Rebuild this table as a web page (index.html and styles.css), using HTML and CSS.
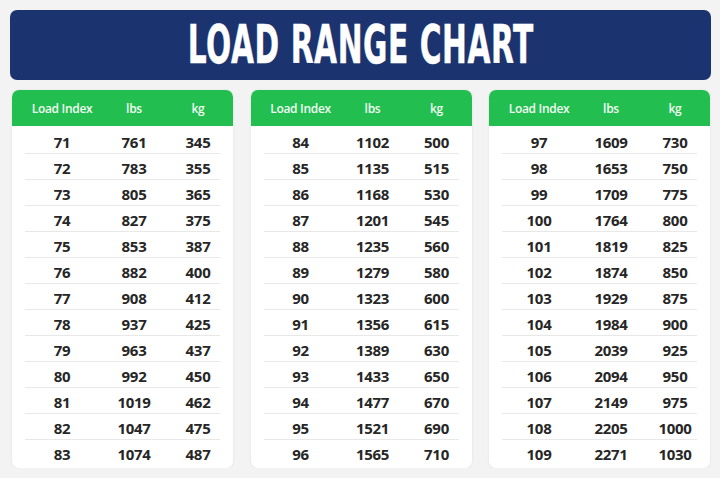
FILE: index.html
```html
<!DOCTYPE html>
<html>
<head>
<meta charset="utf-8">
<link rel="stylesheet" href="styles.css">
</head>
<body>
<div class="page">
  <header class="banner"><h1 class="title"><span>LOAD RANGE CHART</span></h1></header>
  <div class="tables">
    <section class="card">
      <div class="head"><span>Load Index</span><span>lbs</span><span>kg</span></div>
      <div class="rows">
        <div class="row"><span>71</span><span>761</span><span>345</span></div>
        <div class="row"><span>72</span><span>783</span><span>355</span></div>
        <div class="row"><span>73</span><span>805</span><span>365</span></div>
        <div class="row"><span>74</span><span>827</span><span>375</span></div>
        <div class="row"><span>75</span><span>853</span><span>387</span></div>
        <div class="row"><span>76</span><span>882</span><span>400</span></div>
        <div class="row"><span>77</span><span>908</span><span>412</span></div>
        <div class="row"><span>78</span><span>937</span><span>425</span></div>
        <div class="row"><span>79</span><span>963</span><span>437</span></div>
        <div class="row"><span>80</span><span>992</span><span>450</span></div>
        <div class="row"><span>81</span><span>1019</span><span>462</span></div>
        <div class="row"><span>82</span><span>1047</span><span>475</span></div>
        <div class="row"><span>83</span><span>1074</span><span>487</span></div>
      </div>
    </section>
    <section class="card">
      <div class="head"><span>Load Index</span><span>lbs</span><span>kg</span></div>
      <div class="rows">
        <div class="row"><span>84</span><span>1102</span><span>500</span></div>
        <div class="row"><span>85</span><span>1135</span><span>515</span></div>
        <div class="row"><span>86</span><span>1168</span><span>530</span></div>
        <div class="row"><span>87</span><span>1201</span><span>545</span></div>
        <div class="row"><span>88</span><span>1235</span><span>560</span></div>
        <div class="row"><span>89</span><span>1279</span><span>580</span></div>
        <div class="row"><span>90</span><span>1323</span><span>600</span></div>
        <div class="row"><span>91</span><span>1356</span><span>615</span></div>
        <div class="row"><span>92</span><span>1389</span><span>630</span></div>
        <div class="row"><span>93</span><span>1433</span><span>650</span></div>
        <div class="row"><span>94</span><span>1477</span><span>670</span></div>
        <div class="row"><span>95</span><span>1521</span><span>690</span></div>
        <div class="row"><span>96</span><span>1565</span><span>710</span></div>
      </div>
    </section>
    <section class="card">
      <div class="head"><span>Load Index</span><span>lbs</span><span>kg</span></div>
      <div class="rows">
        <div class="row"><span>97</span><span>1609</span><span>730</span></div>
        <div class="row"><span>98</span><span>1653</span><span>750</span></div>
        <div class="row"><span>99</span><span>1709</span><span>775</span></div>
        <div class="row"><span>100</span><span>1764</span><span>800</span></div>
        <div class="row"><span>101</span><span>1819</span><span>825</span></div>
        <div class="row"><span>102</span><span>1874</span><span>850</span></div>
        <div class="row"><span>103</span><span>1929</span><span>875</span></div>
        <div class="row"><span>104</span><span>1984</span><span>900</span></div>
        <div class="row"><span>105</span><span>2039</span><span>925</span></div>
        <div class="row"><span>106</span><span>2094</span><span>950</span></div>
        <div class="row"><span>107</span><span>2149</span><span>975</span></div>
        <div class="row"><span>108</span><span>2205</span><span>1000</span></div>
        <div class="row"><span>109</span><span>2271</span><span>1030</span></div>
      </div>
    </section>
  </div>
</div>
</body>
</html>
```

FILE: styles.css
```css
html, body {
  margin: 0;
  background: #f2f3f2;
}

.page {
  padding: 10px 9px 0 10px;
}

.banner {
  height: 70px;
  background: #1b3470;
  border-radius: 7px;
  display: flex;
  align-items: center;
  justify-content: center;
  overflow: hidden;
}

.title {
  margin: 0;
  color: #ffffff;
  font-family: "DejaVu Sans", sans-serif;
  font-weight: 700;
  font-size: 54px;
  line-height: 1;
  white-space: nowrap;
}

.title span {
  display: inline-block;
  transform: scaleX(0.55);
  -webkit-text-stroke: 0.5px #ffffff;
  letter-spacing: 1px;
}

.tables {
  display: grid;
  grid-template-columns: repeat(3, 221px);
  column-gap: 17.5px;
  margin: 10px 0 0 2px;
}

.card {
  background: #ffffff;
  border-radius: 7px;
  height: 378px;
  box-shadow: 0 0 3px rgba(0, 0, 0, 0.08);
}

.head {
  height: 36px;
  background: #22bf50;
  border-radius: 7px 7px 0 0;
  display: grid;
  grid-template-columns: 74px 70px 1fr;
  align-items: center;
  padding: 0 13px;
  color: #f2fbf4;
  font-family: "Open Sans", sans-serif;
  font-weight: 600;
  font-size: 12px;
  letter-spacing: -0.3px;
  text-align: center;
}

.rows {
  padding: 2px 13px 0;
}

.row {
  display: grid;
  grid-template-columns: 74px 70px 1fr;
  height: 26px;
  box-sizing: border-box;
  padding-top: 4px;
  line-height: 21px;
  border-bottom: 1px solid #e8e8e8;
  font-family: "Open Sans", sans-serif;
  font-weight: 700;
  font-size: 15px;
  letter-spacing: -0.3px;
  color: #262626;
  text-align: center;
}

.row:last-child {
  border-bottom: 0;
}

.row span:nth-child(3),
.head span:nth-child(3) {
  padding-left: 7px;
}
```
